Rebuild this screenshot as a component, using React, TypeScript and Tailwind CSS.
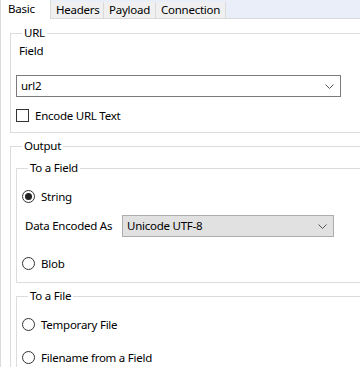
import React from "react";

const font = { fontFamily: '"Noto Sans", "Segoe UI", sans-serif' };

function Chevron() {
  return (
    <svg width="9" height="5" viewBox="0 0 9 5" className="shrink-0">
      <path d="M0.5 0.5 L4.5 4.5 L8.5 0.5" fill="none" stroke="#555" strokeWidth="1" />
    </svg>
  );
}

function Radio({ checked, label }: { checked?: boolean; label: string }) {
  return (
    <div className="flex items-center h-[13px]">
      <div className="w-[13px] h-[13px] rounded-full border border-[#333] flex items-center justify-center">
        {checked && <div className="w-[7px] h-[7px] rounded-full bg-[#222]" />}
      </div>
      <span className="ml-[6px]">{label}</span>
    </div>
  );
}

function Group({ title, className, children }: { title: string; className?: string; children: React.ReactNode }) {
  return (
    <fieldset className={"border border-[#dcdcdc] " + (className ?? "")}>
      <legend className="ml-[6px] px-[2px] leading-[14px]">{title}</legend>
      {children}
    </fieldset>
  );
}

export default function App() {
  return (
    <div className="w-[360px] h-[367px] overflow-hidden bg-white text-[11.5px] tracking-[-0.25px] text-black" style={font}>
      <div className="flex h-[19px] bg-[#eaeef8] border-b border-[#dadada]">
        <div className="w-[51px] h-[19px] bg-white border-l border-r border-[#dadada] pl-[7px] leading-[17px]">Basic</div>
        <div className="mt-[2px] w-[53px] bg-[#f0f0f0] border-r border-[#dadada] pl-[5px] leading-[16px]">Headers</div>
        <div className="mt-[2px] w-[52px] bg-[#f0f0f0] border-r border-[#dadada] pl-[5px] leading-[16px]">Payload</div>
        <div className="mt-[2px] w-[70px] bg-[#f0f0f0] border-r border-[#dadada] pl-[5px] leading-[16px]">Connection</div>
      </div>
      <div className="border-l border-[#dadada] h-[348px] pl-[9px] pt-[7px] w-[420px]">
        <Group title="URL" className="pl-[5px] pb-[10px]">
          <div className="pt-[3px] ml-[3px] leading-[16px]">Field</div>
          <div className="mt-[16px] w-[325px] h-[22px] border border-[#7a7a7a] bg-white flex items-center justify-between pl-[4px] pr-[6px]">
            <span>url2</span>
            <Chevron />
          </div>
          <div className="mt-[12px] flex items-center h-[13px]">
            <div className="w-[13px] h-[13px] border border-[#333] bg-white" />
            <span className="ml-[6px]">Encode URL Text</span>
          </div>
        </Group>
        <Group title="Output" className="mt-[6px] pl-[5px] h-[260px]">
          <Group title="To a Field" className="mt-[8px] pl-[5px] pb-[12px]">
            <div className="mt-[15px]">
              <Radio checked label="String" />
            </div>
            <div className="mt-[12px] flex items-center h-[22px]">
              <span className="ml-[3px] w-[97px]">Data Encoded As</span>
              <div className="w-[212px] h-[22px] border border-[#adadad] bg-[#e1e1e1] flex items-center justify-between pl-[4px] pr-[6px]">
                <span>Unicode UTF-8</span>
                <Chevron />
              </div>
            </div>
            <div className="mt-[20px]">
              <Radio label="Blob" />
            </div>
          </Group>
          <Group title="To a File" className="mt-[6px] pl-[5px] pb-[12px]">
            <div className="mt-[15px]">
              <Radio label="Temporary File" />
            </div>
            <div className="mt-[20px]">
              <Radio label="Filename from a Field" />
            </div>
          </Group>
        </Group>
      </div>
    </div>
  );
}
